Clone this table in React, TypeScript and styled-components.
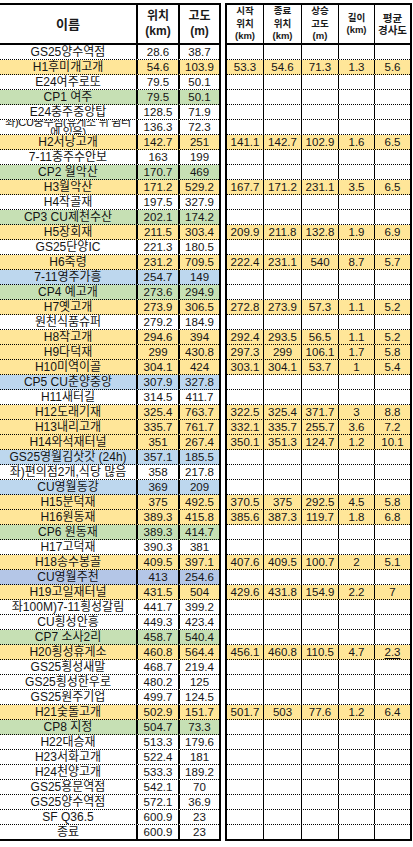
import React from "react";
import styled, { createGlobalStyle } from "styled-components";

const GlobalStyle = createGlobalStyle`
  * {
    box-sizing: border-box;
  }
  body {
    margin: 0;
    background: #ffffff;
    font-family: "Liberation Sans", "Noto Sans CJK KR", sans-serif;
    color: #141414;
  }
`;

const YELLOW = "#ffe699";
const GREEN = "#c6e0b4";
const BLUE = "#bdd7ee";
const PURPLE = "#b4c6e7";

type Climb = [string, string, string, string, string];
type Stop = {
  name: string;
  pos: string;
  alt: string;
  bg?: string;
  climb?: Climb;
  wrap?: boolean;
};

const stops: Stop[] = [
  { name: "GS25양수역점", pos: "28.6", alt: "38.7" },
  { name: "H1후미개고개", pos: "54.6", alt: "103.9", bg: YELLOW, climb: ["53.3", "54.6", "71.3", "1.3", "5.6"] },
  { name: "E24여주로또", pos: "79.5", alt: "50.1" },
  { name: "CP1 여주", pos: "79.5", alt: "50.1", bg: GREEN },
  { name: "E24충주중앙탑", pos: "128.5", alt: "71.9" },
  { name: "좌)CU충주점(휴게소 뒤 쉼터에 있음)", pos: "136.3", alt: "72.3", wrap: true },
  { name: "H2서낭고개", pos: "142.7", alt: "251", bg: YELLOW, climb: ["141.1", "142.7", "102.9", "1.6", "6.5"] },
  { name: "7-11충주수안보", pos: "163", alt: "199" },
  { name: "CP2 월악산", pos: "170.7", alt: "469", bg: GREEN },
  { name: "H3월악산", pos: "171.2", alt: "529.2", bg: YELLOW, climb: ["167.7", "171.2", "231.1", "3.5", "6.5"] },
  { name: "H4작골재", pos: "197.5", alt: "327.9" },
  { name: "CP3 CU제천수산", pos: "202.1", alt: "174.2", bg: GREEN },
  { name: "H5장회재", pos: "211.5", alt: "303.4", bg: YELLOW, climb: ["209.9", "211.8", "132.8", "1.9", "6.9"] },
  { name: "GS25단양IC", pos: "221.3", alt: "180.5" },
  { name: "H6죽령", pos: "231.2", alt: "709.5", bg: YELLOW, climb: ["222.4", "231.1", "540", "8.7", "5.7"] },
  { name: "7-11영주가흥", pos: "254.7", alt: "149", bg: BLUE },
  { name: "CP4 예고개", pos: "273.6", alt: "294.9", bg: GREEN },
  { name: "H7옛고개", pos: "273.9", alt: "306.5", bg: YELLOW, climb: ["272.8", "273.9", "57.3", "1.1", "5.2"] },
  { name: "원천식품슈퍼", pos: "279.2", alt: "184.9" },
  { name: "H8작고개", pos: "294.6", alt: "394", bg: YELLOW, climb: ["292.4", "293.5", "56.5", "1.1", "5.2"] },
  { name: "H9다덕재", pos: "299", alt: "430.8", bg: YELLOW, climb: ["297.3", "299", "106.1", "1.7", "5.8"] },
  { name: "H10미역이골", pos: "304.1", alt: "424", bg: YELLOW, climb: ["303.1", "304.1", "53.7", "1", "5.4"] },
  { name: "CP5 CU춘양중앙", pos: "307.9", alt: "327.8", bg: BLUE },
  { name: "H11새터길", pos: "314.5", alt: "411.7" },
  { name: "H12도래기재", pos: "325.4", alt: "763.7", bg: YELLOW, climb: ["322.5", "325.4", "371.7", "3", "8.8"] },
  { name: "H13내리고개", pos: "335.7", alt: "761.7", bg: YELLOW, climb: ["332.1", "335.7", "255.7", "3.6", "7.2"] },
  { name: "H14와석재터널", pos: "351", alt: "267.4", bg: YELLOW, climb: ["350.1", "351.3", "124.7", "1.2", "10.1"] },
  { name: "GS25영월김삿갓 (24h)", pos: "357.1", alt: "185.5", bg: BLUE },
  { name: "좌)편의점2개,식당 많음", pos: "358", alt: "217.8" },
  { name: "CU영월동강", pos: "369", alt: "209", bg: BLUE },
  { name: "H15분덕재", pos: "375", alt: "492.5", bg: YELLOW, climb: ["370.5", "375", "292.5", "4.5", "5.8"] },
  { name: "H16원동재", pos: "389.3", alt: "415.8", bg: YELLOW, climb: ["385.6", "387.3", "119.7", "1.8", "6.8"] },
  { name: "CP6 원동재", pos: "389.3", alt: "414.7", bg: GREEN },
  { name: "H17고덕재", pos: "390.3", alt: "381" },
  { name: "H18송수봉골", pos: "409.5", alt: "397.1", bg: YELLOW, climb: ["407.6", "409.5", "100.7", "2", "5.1"] },
  { name: "CU영월주천", pos: "413", alt: "254.6", bg: PURPLE },
  { name: "H19고일재터널", pos: "431.5", alt: "504", bg: YELLOW, climb: ["429.6", "431.8", "154.9", "2.2", "7"] },
  { name: "좌100M)7-11횡성갈림", pos: "441.7", alt: "399.2" },
  { name: "CU횡성안흥", pos: "449.3", alt: "423.4" },
  { name: "CP7 소사2리", pos: "458.7", alt: "540.4", bg: GREEN },
  { name: "H20횡성휴게소", pos: "460.8", alt: "564.4", bg: YELLOW, climb: ["456.1", "460.8", "110.5", "4.7", "2.3"] },
  { name: "GS25횡성새말", pos: "468.7", alt: "219.4" },
  { name: "GS25횡성한우로", pos: "480.2", alt: "125" },
  { name: "GS25원주기업", pos: "499.7", alt: "124.5" },
  { name: "H21숯돌고개", pos: "502.9", alt: "151.7", bg: YELLOW, climb: ["501.7", "503", "77.6", "1.2", "6.4"] },
  { name: "CP8 지정", pos: "504.7", alt: "73.3", bg: GREEN },
  { name: "H22대승재", pos: "513.3", alt: "179.6" },
  { name: "H23서화고개", pos: "522.4", alt: "181" },
  { name: "H24천양고개", pos: "533.3", alt: "189.2" },
  { name: "GS25용문역점", pos: "542.1", alt: "70" },
  { name: "GS25양수역점", pos: "572.1", alt: "36.9" },
  { name: "SF Q36.5", pos: "600.9", alt: "23" },
  { name: "종료", pos: "600.9", alt: "23" },
];

const Sheet = styled.div`
  display: flex;
  gap: 4px;
  padding-top: 3px;
  width: 413px;
`;

const Table = styled.div<{ $side: "left" | "right" }>`
  border-top: 2px solid #000;
  border-bottom: 2px solid #000;
  border-right: 2px solid #000;
  border-left: ${(p) => (p.$side === "right" ? "2px solid #000" : "none")};
`;

const HeaderRow = styled.div<{ $cols: string }>`
  display: grid;
  grid-template-columns: ${(p) => p.$cols};
  grid-template-rows: minmax(0, 1fr);
  height: 40px;
  border-bottom: 2px solid #000;
`;

const Row = styled.div<{ $cols: string; $bg?: string; $last?: boolean }>`
  display: grid;
  grid-template-columns: ${(p) => p.$cols};
  grid-template-rows: minmax(0, 1fr);
  height: ${(p) => (p.$last ? "14px" : "15px")};
  background: ${(p) => p.$bg || "#ffffff"};
  border-bottom: ${(p) => (p.$last ? "none" : "1px dotted #000")};
`;

const Cell = styled.div<{ $line: number; $size?: number }>`
  display: flex;
  align-items: center;
  justify-content: center;
  min-height: 0;
  border-right: ${(p) => (p.$line ? `${p.$line}px solid #000` : "none")};
  font-size: ${(p) => p.$size || 12}px;
  white-space: nowrap;
  line-height: 14px;
`;

const WrapCell = styled(Cell)`
  white-space: normal;
  overflow: hidden;
  text-align: center;
  line-height: 10px;
  letter-spacing: -0.3px;
  padding: 0 2px;
`;

const HeadCell = styled.div<{ $line: number; $size: number; $lh: number }>`
  display: flex;
  align-items: center;
  justify-content: center;
  text-align: center;
  border-right: ${(p) => (p.$line ? `${p.$line}px solid #000` : "none")};
  font-size: ${(p) => p.$size}px;
  line-height: ${(p) => p.$lh}px;
  font-weight: 700;
  color: #1a1a1a;
`;

const Marked = styled.span`
  text-decoration: underline;
  text-underline-offset: 2px;
`;

const LEFT_COLS = "138px 42px 39px";
const RIGHT_COLS = "37px 38px 37px 36px 35px";

const NameTable = () => (
  <Table $side="left">
    <HeaderRow $cols={LEFT_COLS}>
      <HeadCell $line={2} $size={13} $lh={15}>이름</HeadCell>
      <HeadCell $line={2} $size={12} $lh={15}>
        위치
        <br />
        (km)
      </HeadCell>
      <HeadCell $line={0} $size={12} $lh={15}>
        고도
        <br />
        (m)
      </HeadCell>
    </HeaderRow>
    {stops.map((s, i) => (
      <Row key={i} $cols={LEFT_COLS} $bg={s.bg} $last={i === stops.length - 1}>
        {s.wrap ? (
          <WrapCell $line={2} $size={11}>{s.name}</WrapCell>
        ) : (
          <Cell $line={2}>{s.name}</Cell>
        )}
        <Cell $line={2} $size={11.5}>{s.pos}</Cell>
        <Cell $line={0} $size={11.5}>{s.alt}</Cell>
      </Row>
    ))}
  </Table>
);

const climbHeads = [
  ["시작", "위치", "(km)"],
  ["종료", "위치", "(km)"],
  ["상승", "고도", "(m)"],
  ["길이", "(km)"],
  ["평균", "경사도"],
];

const ClimbTable = () => (
  <Table $side="right">
    <HeaderRow $cols={RIGHT_COLS}>
      {climbHeads.map((lines, i) => (
        <HeadCell key={i} $line={i < 4 ? 1 : 0} $size={i === 4 ? 10.5 : 9.5} $lh={12.5}>
          <span>
            {lines.map((l, j) => (
              <React.Fragment key={j}>
                {j > 0 && <br />}
                {l}
              </React.Fragment>
            ))}
          </span>
        </HeadCell>
      ))}
    </HeaderRow>
    {stops.map((s, i) => (
      <Row
        key={i}
        $cols={RIGHT_COLS}
        $bg={s.climb ? YELLOW : undefined}
        $last={i === stops.length - 1}
      >
        {[0, 1, 2, 3, 4].map((c) => (
          <Cell key={c} $line={c < 4 ? 1 : 0} $size={11.5}>
            {s.climb && s.name.startsWith("H20") && c === 4 ? (
              <Marked>{s.climb[c]}</Marked>
            ) : (
              s.climb?.[c]
            )}
          </Cell>
        ))}
      </Row>
    ))}
  </Table>
);

export default function App() {
  return (
    <>
      <GlobalStyle />
      <Sheet>
        <NameTable />
        <ClimbTable />
      </Sheet>
    </>
  );
}
